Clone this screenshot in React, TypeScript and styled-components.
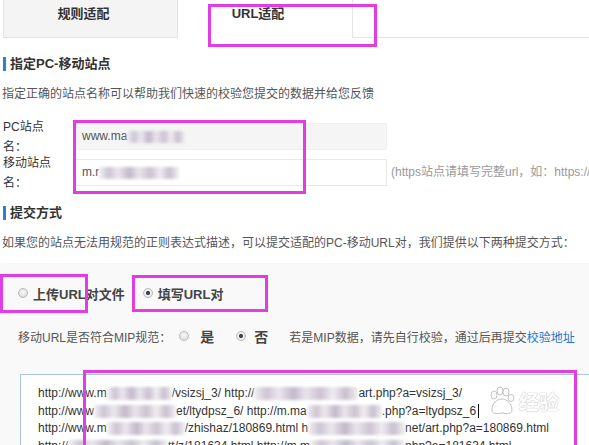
import React from "react";
import styled, { createGlobalStyle } from "styled-components";

const Global = createGlobalStyle`
  html, body { margin: 0; padding: 0; background: #fff; }
  body { font-family: "Liberation Sans", "Noto Sans CJK SC", sans-serif; }
`;

const FONT = `"Liberation Sans", "Noto Sans CJK SC", sans-serif`;

const Page = styled.div`
  position: relative;
  width: 589px;
  height: 445px;
  overflow: hidden;
  background: #fff;
  font-family: ${FONT};
  font-size: 12px;
  color: #555;
  display: flex;
  flex-direction: column;
`;

const TabBar = styled.div`
  display: flex;
  height: 38px;
  padding-left: 3px;
  flex-shrink: 0;
`;

const Tab = styled.div<{ $active?: boolean }>`
  box-sizing: border-box;
  width: ${(p) => (p.$active ? "174px" : "175px")};
  height: 38px;
  padding: 6px 14px 0 0;
  text-align: center;
  font-size: 13px;
  font-weight: bold;
  line-height: 16px;
  color: #333;
  background: ${(p) => (p.$active ? "#fff" : "#f4f4f4")};
  border: ${(p) => (p.$active ? "none" : "1px solid #e4e4e4")};
  border-top: none;
`;

const TabFill = styled.div`
  flex: 1;
  border-left: 1px solid #e4e4e4;
  border-bottom: 1px solid #e4e4e4;
`;

const Heading = styled.div<{ $top: number }>`
  display: flex;
  align-items: center;
  gap: 4px;
  margin-top: ${(p) => p.$top}px;
  padding-left: 3px;
  font-size: 13px;
  font-weight: bold;
  line-height: 16px;
  color: #333;
`;

const Bar = styled.span`
  width: 3px;
  height: 14px;
  background: #2b7fd8;
`;

const Desc = styled.div<{ $top: number }>`
  margin-top: ${(p) => p.$top}px;
  padding-left: 2px;
  line-height: 18px;
  color: #555;
  white-space: nowrap;
`;

const Form = styled.div`
  margin-top: 14px;
  display: flex;
  flex-direction: column;
`;

const FieldRow = styled.div`
  display: flex;
  align-items: flex-start;
  height: 36px;
  padding-left: 3px;
`;

const Label = styled.div`
  flex: 0 0 52px;
  margin-right: 20px;
  line-height: 20px;
  color: #333;
  font-size: 12px;
`;

const Input = styled.div<{ $disabled?: boolean }>`
  box-sizing: border-box;
  flex: 0 0 312px;
  height: 27px;
  margin-top: 6px;
  padding-left: 6px;
  border: 1px solid ${(p) => (p.$disabled ? "#f0f0f0" : "#e8e8e8")};
  background: ${(p) => (p.$disabled ? "#f5f5f5" : "#fff")};
  line-height: 25px;
  color: #555;
  white-space: nowrap;
  display: flex;
  align-items: center;
`;

const Hint = styled.div`
  margin: 6px 0 0 4px;
  line-height: 27px;
  color: #999;
  white-space: nowrap;
  min-width: 0;
`;

const Blur = styled.span<{ $w: number; $h?: number }>`
  display: inline-block;
  width: ${(p) => p.$w}px;
  height: ${(p) => p.$h ?? 13}px;
  vertical-align: -3px;
  background: linear-gradient(
    90deg,
    #f4f2f6 0%,
    #cdc4d2 12%,
    #ebe7ee 24%,
    #c2b8c9 38%,
    #e9e5ec 50%,
    #cbc2d0 64%,
    #f0edf2 76%,
    #c8bfcd 88%,
    #f3f1f5 100%
  );
  filter: blur(1.4px);
`;

const Panel = styled.div`
  flex: 1;
  margin-top: 11px;
  padding: 20px 0 0 18px;
  background: #f9f9f9;
  display: flex;
  flex-direction: column;
`;

const RadioRow = styled.div`
  display: flex;
  align-items: center;
  height: 20px;
  gap: 18px;
`;

const Option = styled.label`
  display: flex;
  align-items: center;
  gap: 5px;
  font-size: 13px;
  font-weight: bold;
  color: #444;
  white-space: nowrap;
`;

const Radio = styled.span<{ $checked?: boolean }>`
  box-sizing: border-box;
  width: 10px;
  height: 10px;
  border-radius: 50%;
  border: 1px solid #b9b9b9;
  background: ${(p) =>
    p.$checked
      ? "radial-gradient(circle, #444 0 1.8px, #f4f4f4 2.4px, #dcdcdc 100%)"
      : "radial-gradient(circle at 50% 40%, #f8f8f8 0, #e4e4e4 60%, #cfcfcf 100%)"};
  flex-shrink: 0;
`;

const MipRow = styled.div`
  display: flex;
  align-items: center;
  height: 20px;
  margin-top: 23px;
  white-space: nowrap;
  color: #555;
`;

const MipChoice = styled.span<{ $gap: number; $lead: number }>`
  display: flex;
  align-items: center;
  gap: ${(p) => p.$gap}px;
  margin-left: ${(p) => p.$lead}px;
  font-size: 14px;
  font-weight: bold;
  color: #444;
`;

const MipHint = styled.span`
  margin-left: 21px;
  color: #555;
`;

const Link = styled.a`
  color: #2277cc;
  text-decoration: none;
`;

const TextBox = styled.div`
  box-sizing: border-box;
  margin: 28px 0 0 2px;
  width: 620px;
  flex: 1;
  background: #fff;
  border: 1px solid #a9c3e2;
  border-bottom: none;
  padding: 10px 0 0 17px;
  font-size: 12px;
  line-height: 17.5px;
  color: #333;
`;

const Line = styled.div`
  white-space: nowrap;
`;

const Caret = styled.span`
  display: inline-block;
  width: 1px;
  height: 14px;
  margin-left: 2px;
  background: #111;
  vertical-align: -3px;
`;

const Mark = styled.div<{ $x: number; $y: number; $w: number; $h: number }>`
  position: absolute;
  box-sizing: border-box;
  left: ${(p) => p.$x}px;
  top: ${(p) => p.$y}px;
  width: ${(p) => p.$w}px;
  height: ${(p) => p.$h}px;
  border: 3px solid #e23de4;
  pointer-events: none;
`;

const Watermark = styled.div`
  position: absolute;
  left: 486px;
  top: 386px;
  display: flex;
  align-items: center;
  gap: 3px;
  opacity: 0.7;
  pointer-events: none;
  color: #fff;
  text-shadow: 0 0 1px #9a9a9a, 0 0 1px #9a9a9a;
`;

const WmCjk = styled.span`
  font-family: "Noto Sans CJK SC", sans-serif;
  font-size: 20px;
  font-weight: bold;
`;

const Paw = () => (
  <svg width="30" height="30" viewBox="0 0 30 30">
    <g fill="#fff" stroke="#a8a8a8" strokeWidth="1">
      <ellipse cx="8" cy="9" rx="3" ry="4" />
      <ellipse cx="14" cy="5" rx="3" ry="4" />
      <ellipse cx="20" cy="6" rx="3" ry="4" />
      <ellipse cx="25" cy="12" rx="3" ry="3.5" />
      <path d="M6 24 C6 17 11 13 16 13 C21 13 26 18 26 24 C26 28 21 28 16 27 C11 28 6 28 6 24 Z" />
    </g>
  </svg>
);

export default function App() {
  return (
    <>
      <Global />
      <Page>
        <TabBar>
          <Tab>规则适配</Tab>
          <Tab $active>URL适配</Tab>
          <TabFill />
        </TabBar>

        <Heading $top={18}>
          <Bar />
          指定PC-移动站点
        </Heading>
        <Desc $top={13}>指定正确的站点名称可以帮助我们快速的校验您提交的数据并给您反馈</Desc>

        <Form>
          <FieldRow>
            <Label>PC站点名：</Label>
            <Input $disabled>
              www.ma
              <Blur $w={58} $h={12} />
            </Input>
          </FieldRow>
          <FieldRow>
            <Label>移动站点名：</Label>
            <Input>
              m.r
              <Blur $w={80} $h={12} />
            </Input>
            <Hint>(https站点请填写完整url，如：https://m.baidu.com)</Hint>
          </FieldRow>
        </Form>

        <Heading $top={16}>
          <Bar />
          提交方式
        </Heading>
        <Desc $top={13}>
          如果您的站点无法用规范的正则表达式描述，可以提交适配的PC-移动URL对，我们提供以下两种提交方式：
        </Desc>

        <Panel>
          <RadioRow>
            <Option>
              <Radio />
              上传URL对文件
            </Option>
            <Option>
              <Radio $checked />
              填写URL对
            </Option>
          </RadioRow>

          <MipRow>
            移动URL是否符合MIP规范：
            <MipChoice $gap={11} $lead={8}>
              <Radio />是
            </MipChoice>
            <MipChoice $gap={8} $lead={22}>
              <Radio $checked />否
            </MipChoice>
            <MipHint>
              若是MIP数据，请先自行校验，通过后再提交<Link>校验地址</Link>
            </MipHint>
          </MipRow>

          <TextBox>
            <Line>
              http://www.m<Blur $w={65} />/vsizsj_3/ http://<Blur $w={104} />art.php?a=vsizsj_3/
            </Line>
            <Line>
              http://www<Blur $w={82} />et/ltydpsz_6/ http://m.ma<Blur $w={75} />.php?a=ltydpsz_6
              <Caret />
            </Line>
            <Line>
              http://www.m<Blur $w={78} />/zhishaz/180869.html h<Blur $w={97} />net/art.php?a=180869.html
            </Line>
            <Line>
              http://<Blur $w={100} />tt/z/181634.html http://m.m<Blur $w={95} />php?a=181634.html
            </Line>
          </TextBox>
        </Panel>

        <Watermark>
          <Paw />
          <WmCjk>经验</WmCjk>
        </Watermark>

        <Mark $x={208} $y={4} $w={169} $h={43} />
        <Mark $x={73} $y={120} $w={233} $h={74} />
        <Mark $x={0} $y={274} $w={88} $h={39} />
        <Mark $x={132} $y={275} $w={136} $h={37} />
        <Mark $x={83} $y={370} $w={494} $h={90} />
      </Page>
    </>
  );
}
